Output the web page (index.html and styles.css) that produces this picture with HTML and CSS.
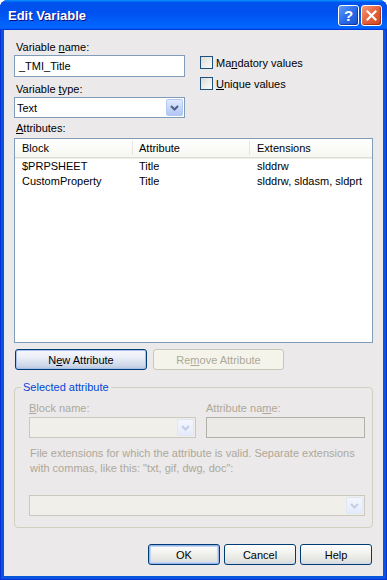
FILE: index.html
```html
<!DOCTYPE html>
<html>
<head>
<meta charset="utf-8">
<link rel="stylesheet" href="styles.css">
</head>
<body>
<div class="window">
  <div class="titlebar">
    <span class="title">Edit Variable</span>
    <div class="tbtns">
      <span class="tb help">?</span>
      <span class="tb close"><svg width="11" height="11" viewBox="0 0 11 11"><path d="M1.5 1.5 L9.5 9.5 M9.5 1.5 L1.5 9.5" stroke="#fff" stroke-width="2.2" stroke-linecap="square"/></svg></span>
    </div>
  </div>
  <div class="client">
    <div class="top">
      <div class="leftcol">
        <span class="lbl ind">Variable <u>n</u>ame:</span>
        <div class="textbox">_TMI_Title</div>
        <span class="lbl ind gap6">Variable <u>t</u>ype:</span>
        <div class="combo"><span class="val">Text</span><span class="drop"><svg width="9" height="6" viewBox="0 0 9 6"><path d="M1 1 L4.5 4.5 L8 1" fill="none" stroke="#4d6185" stroke-width="2"/></svg></span></div>
      </div>
      <div class="rightcol">
        <div class="check"><span class="box"></span><span>Ma<u>n</u>datory values</span></div>
        <div class="check"><span class="box"></span><span><u>U</u>nique values</span></div>
      </div>
    </div>
    <span class="lbl ind attrlbl"><u>A</u>ttributes:</span>
    <div class="list">
      <div class="lhead">
        <span class="c1">Block</span><span class="c2">Attribute</span><span class="c3">Extensions</span>
      </div>
      <div class="rows">
        <div class="lrow"><span class="c1">$PRPSHEET</span><span class="c2">Title</span><span class="c3">slddrw</span></div>
        <div class="lrow"><span class="c1">CustomProperty</span><span class="c2">Title</span><span class="c3">slddrw, sldasm, sldprt</span></div>
      </div>
    </div>
    <div class="btnrow">
      <div class="btn focus w132">N<u>e</u>w Attribute</div>
      <div class="btn disabled w131">Re<u>m</u>ove Attribute</div>
    </div>
    <fieldset class="group">
      <legend>Selected attribute</legend>
      <div class="grow">
        <div class="gcol gc1">
          <span class="lbl dis"><u>B</u>lock name:</span>
          <div class="dcombo"><span class="val"></span><span class="drop ddrop"><svg width="9" height="6" viewBox="0 0 9 6"><path d="M1 1 L4.5 4.5 L8 1" fill="none" stroke="#c3cde3" stroke-width="2"/></svg></span></div>
        </div>
        <div class="gcol gc2">
          <span class="lbl dis">Attribute na<u>m</u>e:</span>
          <div class="dtext"></div>
        </div>
      </div>
      <div class="desc dis">File extensions for which the attribute is valid. Separate extensions<br>with commas, like this: "txt, gif, dwg, doc":</div>
      <div class="dcombo ext"><span class="val"></span><span class="drop ddrop"><svg width="9" height="6" viewBox="0 0 9 6"><path d="M1 1 L4.5 4.5 L8 1" fill="none" stroke="#c3cde3" stroke-width="2"/></svg></span></div>
    </fieldset>
    <div class="footer">
      <div class="btn default">OK</div>
      <div class="btn">Cancel</div>
      <div class="btn">Help</div>
    </div>
  </div>
</div>
</body>
</html>
```

FILE: styles.css
```css
* { box-sizing: border-box; }
html, body { margin: 0; padding: 0; }
body {
  width: 387px;
  height: 580px;
  font-family: "Liberation Sans", Arial, sans-serif;
  font-size: 11px;
  color: #000;
  background: #fff;
}
.window {
  width: 387px;
  height: 580px;
  display: flex;
  flex-direction: column;
  background: #0855dd;
  border-radius: 8px 8px 0 0;
  overflow: hidden;
  padding: 0 4px 4px;
  box-shadow: inset 1px 0 0 #0831d9, inset -1px 0 0 #0831d9, inset 0 -1px 0 #0831d9;
}
.titlebar {
  height: 30px;
  margin: 0 -4px;
  flex: none;
  display: flex;
  align-items: center;
  padding: 0 5px 0 8px;
  background: linear-gradient(to bottom, #0997ff 0%, #0053ee 8%, #0050ee 40%, #0066ff 88%, #0066ff 93%, #005bff 95%, #003dd7 96%, #003dd7 100%);
}
.title {
  flex: 1;
  color: #fff;
  font-weight: bold;
  font-size: 13px;
  text-shadow: 1px 1px 0 #0f1089;
}
.tbtns { display: flex; gap: 2px; }
.tb {
  width: 21px;
  height: 21px;
  border: 1px solid #fff;
  border-radius: 3px;
  display: flex;
  align-items: center;
  justify-content: center;
}
.help {
  background: linear-gradient(135deg, #5f9cf8 0%, #2a6cea 50%, #1b55d6 100%);
  color: #fff;
  font-weight: bold;
  font-size: 15px;
  box-shadow: inset -1px -1px 1px rgba(0,0,60,0.4);
}
.close {
  background: linear-gradient(135deg, #f39a78 0%, #e6603a 50%, #cf4a20 100%);
  box-shadow: inset -1px -1px 1px rgba(80,0,0,0.4);
}
.client {
  flex: 1;
  display: flex;
  flex-direction: column;
  background: #ece9ea;
  padding: 11px 10px 0 10px;
}
.top { display: flex; }
.leftcol { width: 171px; display: flex; flex-direction: column; }
.lbl { display: block; height: 13px; line-height: 13px; white-space: nowrap; }
.ind { padding-left: 2px; }
.gap6 { margin-top: 6px; }
.textbox {
  margin-top: 1px;
  height: 22px;
  border: 1px solid #7f9db9;
  background: #fff;
  padding-left: 4px;
  line-height: 20px;
}
.combo, .dcombo {
  margin-top: 1px;
  height: 21px;
  border: 1px solid #7f9db9;
  background: #fff;
  display: flex;
  align-items: center;
  padding: 1px;
}
.val { flex: 1; padding-left: 1px; }
.drop {
  width: 17px;
  height: 17px;
  border: 1px solid #b6c9f3;
  border-radius: 2px;
  background: linear-gradient(#e2eafd, #c3d4fb 60%, #b1c6f7);
  display: flex;
  align-items: center;
  justify-content: center;
}
.rightcol {
  margin-left: 15px;
  padding-top: 15px;
  display: flex;
  flex-direction: column;
  gap: 8px;
}
.check { display: flex; align-items: center; height: 13px; gap: 3px; }
.box {
  width: 13px;
  height: 13px;
  border: 1px solid #1c5180;
  background: linear-gradient(135deg, #dcdcd7, #fbfbf9);
}
.attrlbl { margin-top: 4px; }
.list {
  margin-top: 3px;
  height: 205px;
  border: 1px solid #7f9db9;
  background: #fff;
  flex: none;
}
.lhead {
  display: flex;
  height: 19px;
  padding-top: 2px;
  line-height: 14px;
  background: linear-gradient(#fff, #f6f6f2);
  border-bottom: 1px solid #dcdcd3;
  box-shadow: 0 1px 0 #efefea;
}
.lhead span { padding-left: 7px; border-right: 1px solid #e6e5df; height: 14px; }
.lhead span.c2 { padding-left: 6px; }
.lhead span.c3 { border-right: none; }
.c1 { width: 118px; }
.c2 { width: 117px; }
.c3 { flex: 1; }
.rows { padding-top: 1px; }
.lrow { display: flex; height: 15px; line-height: 15px; }
.lrow span { padding-left: 7px; white-space: nowrap; }
.lrow span.c2 { padding-left: 6px; }
.btnrow { display: flex; gap: 6px; margin-top: 6px; margin-left: 1px; }
.btn {
  width: 72px;
  height: 21px;
  border: 1px solid #003c74;
  border-radius: 3px;
  background: linear-gradient(#fefefe 0%, #f4f4f1 35%, #e6e6e2 75%, #d4d8e2 100%);
  display: flex;
  align-items: center;
  justify-content: center;
  white-space: nowrap;
}
.w132 { width: 132px; }
.w131 { width: 131px; }
.btn.focus {
  background: linear-gradient(#f7f8fb 0%, #e9edf5 40%, #cfd9ea 80%, #b8c6e0 100%);
  box-shadow: inset 0 0 0 1px #a8c0ec;
}
.btn.disabled {
  border-color: #c9c7ba;
  background: #f5f4ea;
  color: #aca899;
}
.btn.default {
  box-shadow: inset 0 0 0 1px #9bb6ea, inset 0 0 0 2px #c2d3f3;
}
.group {
  margin: 11px 0 0;
  padding: 8px 7px 11px 14px;
  border: 1px solid #d0d0bf;
  border-radius: 4px;
  min-width: 0;
}
.group legend {
  padding: 0 2px;
  margin-left: -8px;
  color: #0046d5;
  line-height: 13px;
}
.dis { color: #aca899; }
.grow { display: flex; gap: 10px; }
.gcol { display: flex; flex-direction: column; }
.gc1 { width: 167px; }
.gc2 { width: 159px; }
.dcombo {
  margin-top: 2px;
  border-color: #cbc8bd;
  background: #f0efea;
}
.ddrop {
  border-color: #dfe6f5;
  background: linear-gradient(#f3f6fd, #e4ebfa);
}
.dtext {
  margin-top: 2px;
  height: 21px;
  border: 1px solid #b0b0a8;
  background: #ebeae6;
}
.desc {
  margin-top: 8px;
  padding-left: 1px;
  line-height: 15px;
  white-space: nowrap;
}
.dcombo.ext { margin-top: 19px; }
.footer {
  display: flex;
  justify-content: flex-end;
  gap: 4px;
  margin-top: 16px;
  margin-right: 1px;
}
```
